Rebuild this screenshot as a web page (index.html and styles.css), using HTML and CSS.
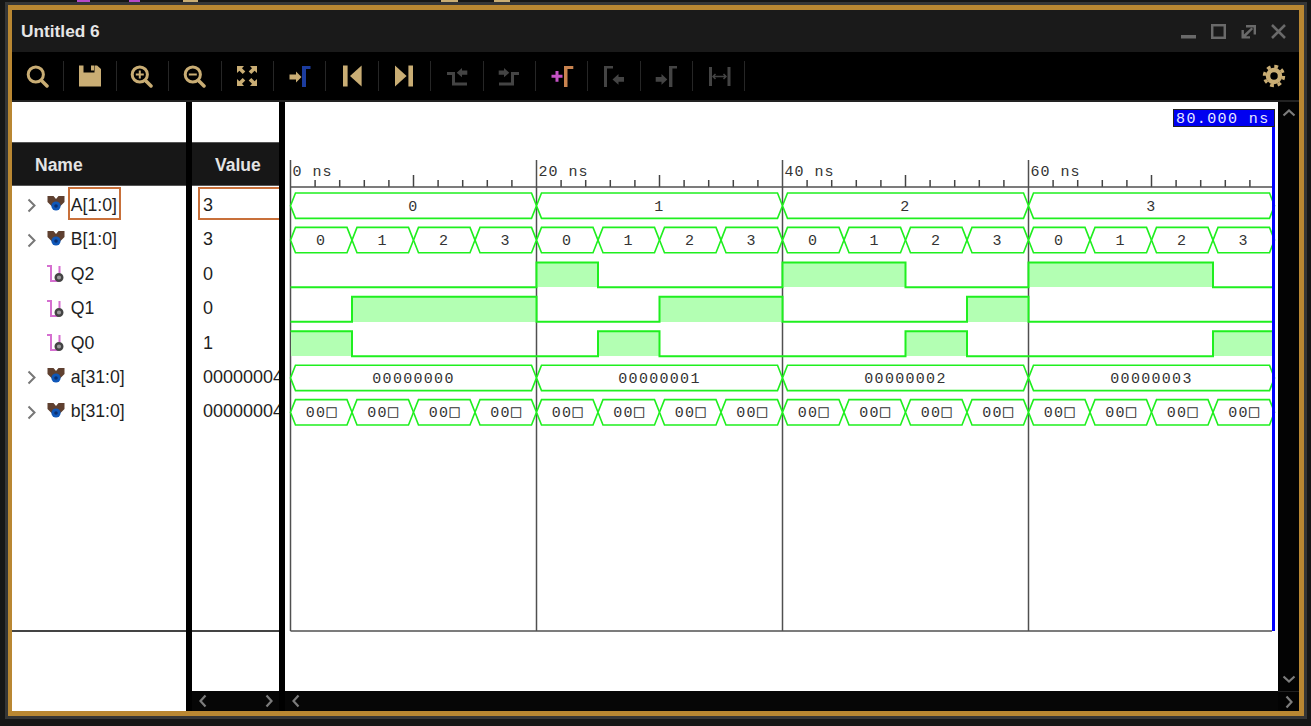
FILE: index.html
```html
<!DOCTYPE html>
<html lang="en">
<head>
    <meta charset="UTF-8">
    <meta name="viewport" content="width=device-width, initial-scale=1.0">
    <title>Untitled 6</title>
    <link rel="stylesheet" href="styles.css">
</head>
<body>
    <div class="behind">
        <span class="peek peek-a"></span>
        <span class="peek peek-b"></span>
        <span class="peek peek-c"></span>
        <span class="peek peek-d"></span>
        <span class="peek peek-e"></span>
    </div>
    <div class="window">
        <div class="titlebar">
            <span class="title">Untitled 6</span>
            <div class="window-btns">
                <svg viewBox="0 0 15 15"><rect x="0" y="11" width="15" height="3.5"/></svg>
                <svg viewBox="0 0 15 15"><rect x="1.2" y="1.2" width="12.6" height="12.6" fill="none" stroke-width="2.4"/></svg>
                <svg viewBox="0 0 15 15"><path d="M5 1h10v9.5h-2.4V3.4H5z"/><path d="M10.5 3.5l1.6 1.6L5 12.2h4V14.6H0.5V6h2.4v4.4z"/></svg>
                <svg viewBox="0 0 15 15"><path d="M1 1l13 13M14 1L1 14" fill="none" stroke-width="2.6"/></svg>
            </div>
        </div>

        <div class="toolbar">
            <div class="tool"><svg viewBox="0 0 24 24"><circle cx="9.8" cy="10.5" r="7.6" class="ring"/><path d="M16 17l5 5" class="handle"/></svg></div>
            <div class="tool"><svg viewBox="0 0 24 24"><path class="tan" d="M1 1.5h4.5v7h11V1.5h2.6l3.9 3.5v17.5H1z"/><rect class="tan" x="13" y="1.5" width="3" height="5"/></svg></div>
            <div class="tool"><svg viewBox="0 0 24 24"><circle cx="9.8" cy="10.5" r="7.6" class="ring"/><path d="M16 17l5 5" class="handle"/><path d="M5.8 10.5h8M9.8 6.5v8" class="thin"/></svg></div>
            <div class="tool"><svg viewBox="0 0 24 24"><circle cx="9.8" cy="10.5" r="7.6" class="ring"/><path d="M16 17l5 5" class="handle"/><path d="M5.8 10.5h8" class="thin"/></svg></div>
            <div class="tool"><svg viewBox="0 0 24 24"><g class="tan"><path d="M2 2h7L7 4.200l3.300 3.300-2.600 2.600L4.400 6.800 2 9z"/><path d="M22 2h-7l2 2.200-3.300 3.300 2.600 2.600 3.300-3.300L22 9z"/><path d="M2 22h7l-2-2.200 3.300-3.300-2.600-2.600-3.300 3.300L2 15z"/><path d="M22 22h-7l2-2.200-3.300-3.300 2.600-2.600 3.300 3.300L22 15z"/></g></svg></div>
            <div class="tool"><svg viewBox="0 0 24 24"><path class="tan" d="M1.5 10.5H8V7.5l5.500 5.500L8 18.500v-3H1.500z"/><path class="blue" d="M14 23V2h8.500v3H18v18z"/></svg></div>
            <div class="tool"><svg viewBox="0 0 24 24"><rect class="tan" x="3" y="1.500" width="4.600" height="21"/><path class="tan" d="M21.600 1.500v21L10 12z"/></svg></div>
            <div class="tool"><svg viewBox="0 0 24 24"><rect class="tan" x="16.400" y="1.500" width="4.600" height="21"/><path class="tan" d="M3 1.500v21L14.600 12z"/></svg></div>
            <div class="tool"><svg viewBox="0 0 24 24"><path class="off-line" d="M2 9.500h6.500V20H22"/><path class="off" d="M22.300 6.500h-5.300V4l-5.300 4.700 5.300 4.600v-2.600h5.300z"/></svg></div>
            <div class="tool"><svg viewBox="0 0 24 24"><path class="off-line" d="M22 9.500h-6.500V20H2"/><path class="off" d="M1.700 6.500h5.300V4l5.300 4.700-5.300 4.600v-2.600H1.700z"/></svg></div>
            <div class="tool"><svg viewBox="0 0 24 24"><path class="magenta" d="M5.500 7h3v3.700h4v3h-4v4h-3v-4h-4v-3h4z"/><path class="orange" d="M14 23V2h9.300v3H17.500v18z"/></svg></div>
            <div class="tool"><svg viewBox="0 0 24 24"><path class="off" d="M2 23V2h9v2.600H5V23z"/><path class="off" d="M22 13h-5.500v-3L10.500 15.500l6 5.300v-3H22z"/></svg></div>
            <div class="tool"><svg viewBox="0 0 24 24"><path class="off" d="M15 23V2h8v2.600h-4.600V23z"/><path class="off" d="M1.700 13h5.800v-3l5.800 5.500-5.800 5.300v-3H1.700z"/></svg></div>
            <div class="tool"><svg viewBox="0 0 24 24"><path class="off-line" d="M3.500 3v19M22 3v19"/><path class="off-thin" d="M6 12.500h13M8.500 10L6 12.500 8.500 15M16.500 10l2.500 2.500-2.500 2.500"/></svg></div>
            <svg class="gear" viewBox="0 0 24 24"><circle cx="12" cy="12" r="9.600" class="gear-teeth"/><circle cx="12" cy="12" r="6" class="gear-ring"/></svg>
        </div>

        <div class="panes">
            <div class="pane name-pane">
                <div class="pane-gap"></div>
                <div class="pane-head"><span class="name-title">Name</span></div>
                <div class="rows name-rows">
                    <div class="row">
                        <svg class="caret" viewBox="0 0 9 15"><path d="M1.500 1.500l6 6-6 6"/></svg>
                        <svg class="bus-icon" viewBox="0 0 18 16"><path class="brown" d="M0.500 0h6l2.500 3 2.500-3h6v6l-5 5h-7l-5-5z"/><circle class="dot" cx="9" cy="10" r="4.600"/><circle class="dot-mid" cx="9" cy="10" r="1.800"/></svg>
                        <span class="label selected">A[1:0]</span>
                    </div>
                    <div class="row">
                        <svg class="caret" viewBox="0 0 9 15"><path d="M1.500 1.500l6 6-6 6"/></svg>
                        <svg class="bus-icon" viewBox="0 0 18 16"><path class="brown" d="M0.500 0h6l2.500 3 2.500-3h6v6l-5 5h-7l-5-5z"/><circle class="dot" cx="9" cy="10" r="4.600"/><circle class="dot-mid" cx="9" cy="10" r="1.800"/></svg>
                        <span class="label">B[1:0]</span>
                    </div>
                    <div class="row">
                        <span class="caret"></span>
                        <svg class="bit-icon" viewBox="0 0 18 18"><path class="pink" d="M0 1h4v15h7M12.500 8V1"/><circle class="pin" cx="12" cy="12.500" r="3.300"/></svg>
                        <span class="label">Q2</span>
                    </div>
                    <div class="row">
                        <span class="caret"></span>
                        <svg class="bit-icon" viewBox="0 0 18 18"><path class="pink" d="M0 1h4v15h7M12.500 8V1"/><circle class="pin" cx="12" cy="12.500" r="3.300"/></svg>
                        <span class="label">Q1</span>
                    </div>
                    <div class="row">
                        <span class="caret"></span>
                        <svg class="bit-icon" viewBox="0 0 18 18"><path class="pink" d="M0 1h4v15h7M12.500 8V1"/><circle class="pin" cx="12" cy="12.500" r="3.300"/></svg>
                        <span class="label">Q0</span>
                    </div>
                    <div class="row">
                        <svg class="caret" viewBox="0 0 9 15"><path d="M1.500 1.500l6 6-6 6"/></svg>
                        <svg class="bus-icon" viewBox="0 0 18 16"><path class="brown" d="M0.500 0h6l2.500 3 2.500-3h6v6l-5 5h-7l-5-5z"/><circle class="dot" cx="9" cy="10" r="4.600"/><circle class="dot-mid" cx="9" cy="10" r="1.800"/></svg>
                        <span class="label">a[31:0]</span>
                    </div>
                    <div class="row">
                        <svg class="caret" viewBox="0 0 9 15"><path d="M1.500 1.500l6 6-6 6"/></svg>
                        <svg class="bus-icon" viewBox="0 0 18 16"><path class="brown" d="M0.500 0h6l2.500 3 2.500-3h6v6l-5 5h-7l-5-5z"/><circle class="dot" cx="9" cy="10" r="4.600"/><circle class="dot-mid" cx="9" cy="10" r="1.800"/></svg>
                        <span class="label">b[31:0]</span>
                    </div>
                </div>
            </div>

            <div class="value-col">
                <div class="pane value-pane">
                    <div class="pane-gap"></div>
                    <div class="pane-head"><span class="value-title">Value</span></div>
                    <div class="rows value-rows">
                        <div class="row"><span class="value selected">3</span></div>
                        <div class="row"><span class="value">3</span></div>
                        <div class="row"><span class="value">0</span></div>
                        <div class="row"><span class="value">0</span></div>
                        <div class="row"><span class="value">1</span></div>
                        <div class="row"><span class="value">00000004</span></div>
                        <div class="row"><span class="value">00000004</span></div>
                    </div>
                </div>
                <div class="hscroll">
                    <svg class="chev" viewBox="0 0 10 14"><path d="M7.500 1.500L2.500 7l5 5.500"/></svg>
                    <svg class="chev" viewBox="0 0 10 14"><path d="M2.500 1.500L7.500 7l-5 5.500"/></svg>
                </div>
            </div>

            <div class="wave-col">
                <div class="wave-pane">
                    <svg id="waves" viewBox="285 102 993 589"></svg>
                </div>
                <div class="hscroll">
                    <svg class="chev" viewBox="0 0 10 14"><path d="M7.500 1.500L2.500 7l5 5.500"/></svg>
                </div>
            </div>

            <div class="vscroll">
                <svg class="chev-v" viewBox="0 0 14 10"><path d="M1.500 7.500L7 2.500l5.500 5"/></svg>
                <svg class="chev-v chev-down" viewBox="0 0 14 10"><path d="M1.500 2.500L7 7.500l5.500-5"/></svg>
                <div class="corner">
                    <svg class="chev" viewBox="0 0 10 14"><path d="M2.500 1.500L7.500 7l-5 5.500"/></svg>
                </div>
            </div>
        </div>
    </div>

    <script src="wave.js"></script>
</body>
</html>
```

FILE: styles.css
```css
html, body {
    margin: 0;
    height: 100%;
}

body {
    background-color: #161616;
    font-family: "Liberation Sans", Arial, sans-serif;
    padding: 0 7px 10px 8px;
    box-sizing: border-box;
    height: 726px;
    overflow: hidden;
}

/* bits of the window underneath, above the top border */
.behind {
    height: 2px;
    margin-bottom: 3px;
    display: flex;
}

.peek {
    height: 2px;
}

.peek-a { width: 13px; margin-left: 69px; background-color: #b548c8; }
.peek-b { width: 11px; margin-left: 39px; background-color: #b548c8; }
.peek-c { width: 15px; margin-left: 43px; background-color: #c9ad74; }
.peek-d { width: 17px; margin-left: 243px; background-color: #c9ad74; }
.peek-e { width: 16px; margin-left: 36px; background-color: #c9ad74; }

.window {
    display: flex;
    flex-direction: column;
    height: 711px;
    box-sizing: border-box;
    border: solid #b98732;
    border-width: 5px 5px 5px 4px;
    background-color: #000000;
    box-shadow: 0 0 0 3px #363636;
}

/* title bar */
.titlebar {
    height: 42px;
    flex: none;
    display: flex;
    align-items: center;
    justify-content: space-between;
    background-color: #1a1a1a;
    padding: 0 13px 0 9px;
}

.title {
    color: #e6e6e6;
    font-size: 17.3px;
    font-weight: bold;
}

.window-btns {
    display: flex;
    gap: 15px;
}

.window-btns svg {
    width: 15px;
    height: 15px;
    fill: #6a6a6a;
    stroke: #6a6a6a;
    stroke-width: 0;
}

.window-btns svg [stroke-width] {
    stroke-width: 2.5;
}

/* toolbar */
.toolbar {
    height: 50px;
    flex: none;
    box-sizing: border-box;
    display: flex;
    align-items: center;
    background-color: #000000;
    border-bottom: 2px solid #222222;
}

.tool {
    width: 52.4px;
    height: 30px;
    box-sizing: border-box;
    flex: none;
    display: flex;
    align-items: center;
    justify-content: center;
    border-right: 1px solid #262626;
}

.tool svg {
    width: 24px;
    height: 24px;
}

.tan { fill: #c9ad74; }
.blue { fill: #1c3c9e; }
.orange { fill: #c9834f; }
.magenta { fill: #c452c4; }
.off { fill: #444444; }

.ring {
    fill: none;
    stroke: #c9ad74;
    stroke-width: 3;
}

.handle {
    fill: none;
    stroke: #c9ad74;
    stroke-width: 3.5;
    stroke-linecap: round;
}

.thin {
    fill: none;
    stroke: #c9ad74;
    stroke-width: 2;
}

.off-line {
    fill: none;
    stroke: #444444;
    stroke-width: 3;
}

.off-thin {
    fill: none;
    stroke: #444444;
    stroke-width: 1.5;
}

.gear {
    width: 24px;
    height: 24px;
    margin-left: auto;
    margin-right: 13px;
}

.gear-teeth {
    fill: none;
    stroke: #c9ad74;
    stroke-width: 3.2;
    stroke-dasharray: 3.8 3.74;
}

.gear-ring {
    fill: none;
    stroke: #c9ad74;
    stroke-width: 4.5;
}

/* panes */
.panes {
    flex: 1;
    min-height: 0;
    display: grid;
    grid-template-columns: 174px 93px 999px 21px;
    background-color: #000000;
}

.pane {
    background-color: #ffffff;
    display: flex;
    flex-direction: column;
}

.pane-gap {
    height: 40px;
    flex: none;
}

.pane-head {
    height: 44px;
    flex: none;
    box-sizing: border-box;
    display: flex;
    align-items: center;
    padding: 2px 0 0 23px;
    background-color: #171717;
    border-top: 1px solid #555555;
    border-bottom: 1px solid #555555;
    color: #e4e4e4;
    font-size: 17.5px;
    font-weight: bold;
}

.rows {
    height: 446px;
    flex: none;
    box-sizing: border-box;
    padding-top: 2.5px;
    border-bottom: 2px solid #444444;
    color: #1f1f1f;
    font-size: 17.7px;
}

.row {
    height: 34.4px;
    display: flex;
    align-items: center;
}

.name-rows .row {
    padding-left: 15px;
}

.caret {
    width: 9px;
    height: 15px;
    flex: none;
    margin-right: 11px;
}

.caret path {
    fill: none;
    stroke: #777777;
    stroke-width: 2;
}

.bus-icon {
    width: 18px;
    height: 16px;
    flex: none;
    margin-right: 3px;
    margin-top: -3px;
}

.bit-icon {
    width: 18px;
    height: 18px;
    flex: none;
    margin-right: 3px;
}

.brown { fill: #5f4030; }
.dot { fill: #0f57b8; }
.dot-mid { fill: #0b2f70; }

.pink {
    fill: none;
    stroke: #d56fd0;
    stroke-width: 2;
}

.pin {
    fill: #9a9a9a;
    stroke: #444444;
    stroke-width: 2.4;
}

.label {
    box-sizing: border-box;
    height: 33px;
    line-height: 33.4px;
    margin-top: -4.4px;
    padding: 0 2px 0 0.7px;
    border: 2px solid transparent;
    white-space: nowrap;
}

.value {
    box-sizing: border-box;
    display: block;
    width: 81px;
    height: 33px;
    line-height: 33.4px;
    margin-top: -4.4px;
    margin-left: 6px;
    padding-left: 3px;
    border: 2px solid transparent;
    border-right: none;
    font-size: 18px;
    overflow: hidden;
    white-space: nowrap;
}

.selected {
    border-color: #c8703a;
}

.value-col,
.wave-col {
    display: flex;
    flex-direction: column;
    min-width: 0;
    padding-left: 6px;
}

.value-pane,
.wave-pane {
    flex: 1;
    min-height: 0;
    overflow: hidden;
}

.wave-pane {
    background-color: #ffffff;
}

.hscroll {
    height: 20px;
    flex: none;
    display: flex;
    align-items: center;
    justify-content: space-between;
    padding: 0 5px 0 6px;
    background-color: #060606;
}

.chev {
    width: 10px;
    height: 14px;
}

.chev path,
.chev-v path {
    fill: none;
    stroke: #7c7c7c;
    stroke-width: 2.2;
}

.vscroll {
    display: flex;
    flex-direction: column;
    align-items: center;
    padding-top: 6px;
    box-sizing: border-box;
    background-color: #030303;
}

.chev-v {
    width: 14px;
    height: 10px;
    flex: none;
}

.chev-down {
    margin-top: auto;
    margin-bottom: 7px;
}

.corner {
    height: 20px;
    width: 100%;
    flex: none;
    box-sizing: border-box;
    display: flex;
    align-items: center;
    justify-content: center;
    border-top: 1px solid #202020;
}

/* wave view */
#waves {
    display: block;
    width: 993px;
    height: 589px;
}

.grid-line {
    stroke: #505050;
    stroke-width: 1.5;
    fill: none;
}

.tick {
    stroke: #444444;
    stroke-width: 1.5;
}

.bus-shape {
    fill: #ffffff;
    stroke: #1fef1f;
    stroke-width: 1.6;
}

.bit-line {
    fill: none;
    stroke: #1fef1f;
    stroke-width: 2;
}

.bit-fill {
    fill: #b3ffb3;
    shape-rendering: crispEdges;
}

.cursor-line {
    fill: #0000ff;
}

.cursor-tag {
    fill: #0000f0;
    stroke: #222222;
    stroke-width: 1;
}

.wave-text {
    font-family: "Liberation Mono", "DejaVu Sans Mono", monospace;
    font-size: 15px;
    letter-spacing: 1.3px;
    fill: #333333;
}

.ruler-text {
    letter-spacing: 1px;
}

.tofu {
    font-family: "DejaVu Sans Mono", monospace;
    font-size: 17px;
    letter-spacing: 0;
}

.cursor-text {
    fill: #e8e8ff;
    letter-spacing: 1.4px;
}
```

FILE: wave.js
```js
const svg = document.getElementById("waves");
const X0 = 290.5;
const SEG = 246;
const STEP = SEG / 4;
const X_END = 1272;
const ROW_Y = [193, 227.4, 261.9, 296.3, 330.8, 365.2, 399.6];
const ROW_H = 25.4;

let out = "";

// grid and ruler
function drawRuler() {
    for (let s = 0; s < 4; s++) {
        const x = X0 + s * SEG;
        out += `<path class="grid-line" d="M${x} 160V631"/>`;
        out += `<text class="wave-text ruler-text" x="${x + 2}" y="176">${s * 20} ns</text>`;
        for (let i = 1; i < 10; i++) {
            const tx = x + i * SEG / 10;
            const top = i === 5 ? 175 : 180;
            out += `<path class="tick" d="M${tx} ${top}V187"/>`;
        }
    }
    out += `<path class="grid-line" d="M${X0} 187H${X_END}"/>`;
    out += `<path class="grid-line" d="M${X0} 631H${X_END}"/>`;
}

function drawBus(row, values) {
    const top = ROW_Y[row];
    const bot = top + ROW_H;
    const mid = top + ROW_H / 2;
    const w = 984 / values.length;
    values.forEach((v, i) => {
        const a = X0 + i * w;
        const b = a + w;
        out += `<polygon class="bus-shape" points="${a},${mid} ${a + 5},${top} ${b - 5},${top} ${b},${mid} ${b - 5},${bot} ${a + 5},${bot}"/>`;
        out += `<text class="wave-text" x="${(a + b) / 2}" y="${mid + 5}" text-anchor="middle">${v}</text>`;
    });
}

function drawBit(row, bits) {
    const top = ROW_Y[row] + 0.5;
    const bot = ROW_Y[row] + ROW_H;
    let line = `M${X0} ${bits[0] ? top : bot}`;
    bits.forEach((bit, i) => {
        const a = X0 + i * STEP;
        const b = Math.min(a + STEP, X_END);
        const y = bit ? top : bot;
        if (bit) {
            out += `<rect class="bit-fill" x="${a}" y="${top}" width="${b - a}" height="${bot - top}"/>`;
        }
        line += `L${a} ${y}L${b} ${y}`;
    });
    out += `<path class="bit-line" d="${line}"/>`;
}

function repeat(list, n) {
    let res = [];
    for (let i = 0; i < n; i++) res = res.concat(list);
    return res;
}

drawRuler();
drawBus(0, [0, 1, 2, 3]);
drawBus(1, repeat([0, 1, 2, 3], 4));
drawBit(2, [0, 0, 0, 0, 1, 0, 0, 0, 1, 1, 0, 0, 1, 1, 1, 0]);
drawBit(3, [0, 1, 1, 1, 0, 0, 1, 1, 0, 0, 0, 1, 0, 0, 0, 0]);
drawBit(4, [1, 0, 0, 0, 0, 1, 0, 0, 0, 0, 1, 0, 0, 0, 0, 1]);
drawBus(5, ["00000000", "00000001", "00000002", "00000003"]);
drawBus(6, repeat(['00<tspan class="tofu">\u25a1</tspan>'], 16));

// cursor at 80 ns
out += `<rect class="cursor-line" x="1272" y="120" width="3" height="511"/>`;
out += `<rect class="cursor-tag" x="1173.5" y="109.5" width="101" height="17"/>`;
out += `<text class="wave-text cursor-text" x="1176" y="123">80.000 ns</text>`;

svg.innerHTML = out;
```
